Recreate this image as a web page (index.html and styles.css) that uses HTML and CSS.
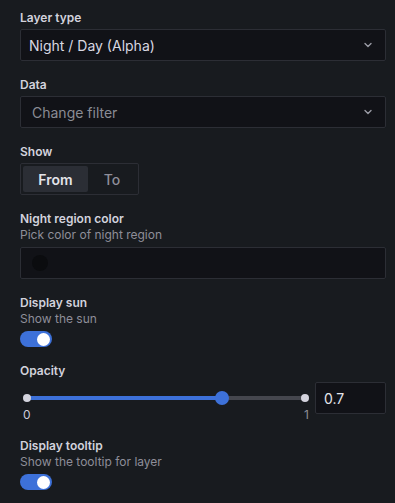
FILE: index.html
```html
<!DOCTYPE html>
<html lang="en">
<head>
    <meta charset="UTF-8">
    <meta name="viewport" content="width=device-width, initial-scale=1.0">
    <title>Layer options</title>
    <link rel="stylesheet" href="styles.css">
</head>
<body>
    <div class="editor">
        <div class="field">
            <div class="label">Layer type</div>
            <div class="select">
                <span class="value">Night / Day (Alpha)</span>
                <svg class="chevron" viewBox="0 0 16 16" width="16" height="16"><path d="M5 6.5 L8 9.5 L11 6.5" fill="none" stroke="currentColor" stroke-width="1.4" stroke-linecap="round" stroke-linejoin="round"/></svg>
            </div>
        </div>

        <div class="field">
            <div class="label">Data</div>
            <div class="select">
                <span class="placeholder">Change filter</span>
                <svg class="chevron" viewBox="0 0 16 16" width="16" height="16"><path d="M5 6.5 L8 9.5 L11 6.5" fill="none" stroke="currentColor" stroke-width="1.4" stroke-linecap="round" stroke-linejoin="round"/></svg>
            </div>
        </div>

        <div class="field">
            <div class="label">Show</div>
            <div class="radio-group">
                <button class="radio active">From</button>
                <button class="radio">To</button>
            </div>
        </div>

        <div class="field">
            <div class="label">Night region color</div>
            <div class="description">Pick color of night region</div>
            <div class="color-input">
                <span class="swatch"></span>
            </div>
        </div>

        <div class="field">
            <div class="label">Display sun</div>
            <div class="description">Show the sun</div>
            <div class="switch"><span class="knob"></span></div>
        </div>

        <div class="field">
            <div class="label">Opacity</div>
            <div class="slider-row">
                <div class="slider">
                    <div class="track">
                        <div class="fill" style="width: 70%"></div>
                        <span class="dot start"></span>
                        <span class="dot end"></span>
                        <span class="thumb" style="left: 70%"></span>
                    </div>
                    <div class="marks">
                        <span>0</span>
                        <span>1</span>
                    </div>
                </div>
                <div class="number-input">0.7</div>
            </div>
        </div>

        <div class="field">
            <div class="label">Display tooltip</div>
            <div class="description">Show the tooltip for layer</div>
            <div class="switch"><span class="knob"></span></div>
        </div>
    </div>
</body>
</html>
```

FILE: styles.css
```css
* {
    margin: 0;
    padding: 0;
    box-sizing: border-box;
}

body {
    font-family: Inter, "Noto Sans", sans-serif;
    background-color: #181b1f;
    color: #ccccdc;
    height: 100vh;
    overflow: hidden;
}

.editor {
    width: 366px;
    margin-left: 20px;
    padding-top: 10px;
}

.field {
    margin-bottom: 16px;
}

.label {
    font-size: 12px;
    font-weight: 600;
    line-height: 15px;
    color: #d2d2dc;
    margin-bottom: 4px;
}

.description {
    font-size: 12px;
    line-height: 17px;
    color: #8e8e99;
    margin-top: -4px;
    margin-bottom: 4px;
}

.select {
    height: 32px;
    background: #111217;
    border: 1px solid #2c2e35;
    border-radius: 2px;
    display: flex;
    align-items: center;
    padding: 0 9px 0 8px;
    font-size: 14px;
}

.select .value {
    flex: 1;
    color: #d8d8e2;
}

.select .placeholder {
    flex: 1;
    color: #8a8c95;
    padding-left: 3px;
}

.chevron {
    color: #9a9ba5;
}

.radio-group {
    display: inline-flex;
    height: 32px;
    padding: 2px;
    border: 1px solid #2c2e35;
    border-radius: 2px;
}

.radio {
    font-family: inherit;
    font-size: 14px;
    font-weight: 500;
    background: none;
    border: none;
    border-radius: 2px;
    color: #8e8e99;
    width: 65px;
    height: 26px;
}

.radio + .radio {
    width: 48px;
}

.radio.active {
    background: #2b2e35;
    color: #e4e4ea;
    font-weight: 600;
}

.color-input {
    height: 32px;
    background: #111217;
    border: 1px solid #2c2e35;
    border-radius: 2px;
    display: flex;
    align-items: center;
    padding-left: 11px;
}

.swatch {
    width: 16px;
    height: 16px;
    border-radius: 50%;
    background: #0b0c0f;
}

.switch {
    width: 32px;
    height: 16px;
    border-radius: 8px;
    background: #3d71d9;
    display: flex;
    align-items: center;
    justify-content: flex-end;
    padding-right: 2px;
}

.knob {
    width: 13px;
    height: 13px;
    border-radius: 50%;
    background: #ffffff;
}

.slider-row {
    display: flex;
    gap: 10px;
    height: 40px;
}

.slider {
    flex: 1;
    padding-left: 7px;
}

.track {
    position: relative;
    margin-top: 14px;
    height: 4px;
    background: #45474e;
    border-radius: 2px;
}

.fill {
    height: 4px;
    background: #3d71d9;
    border-radius: 2px 0 0 2px;
}

.dot {
    position: absolute;
    top: -2px;
    width: 8px;
    height: 8px;
    border-radius: 50%;
    background: #d4d4de;
}

.dot.start {
    left: -4px;
}

.dot.end {
    right: -4px;
}

.thumb {
    position: absolute;
    top: -5px;
    width: 14px;
    height: 14px;
    margin-left: -7px;
    border-radius: 50%;
    background: #3d71d9;
}

.marks {
    display: flex;
    justify-content: space-between;
    font-size: 12px;
    line-height: 15px;
    color: #ccccdc;
    margin: 7px -4px 0 -4px;
}

.marks span:last-child {
    color: #8e8e99;
}

.number-input {
    width: 71px;
    height: 32px;
    background: #111217;
    border: 1px solid #2c2e35;
    border-radius: 2px;
    font-size: 14px;
    color: #e4e4ea;
    display: flex;
    align-items: center;
    padding-left: 8px;
}
```
